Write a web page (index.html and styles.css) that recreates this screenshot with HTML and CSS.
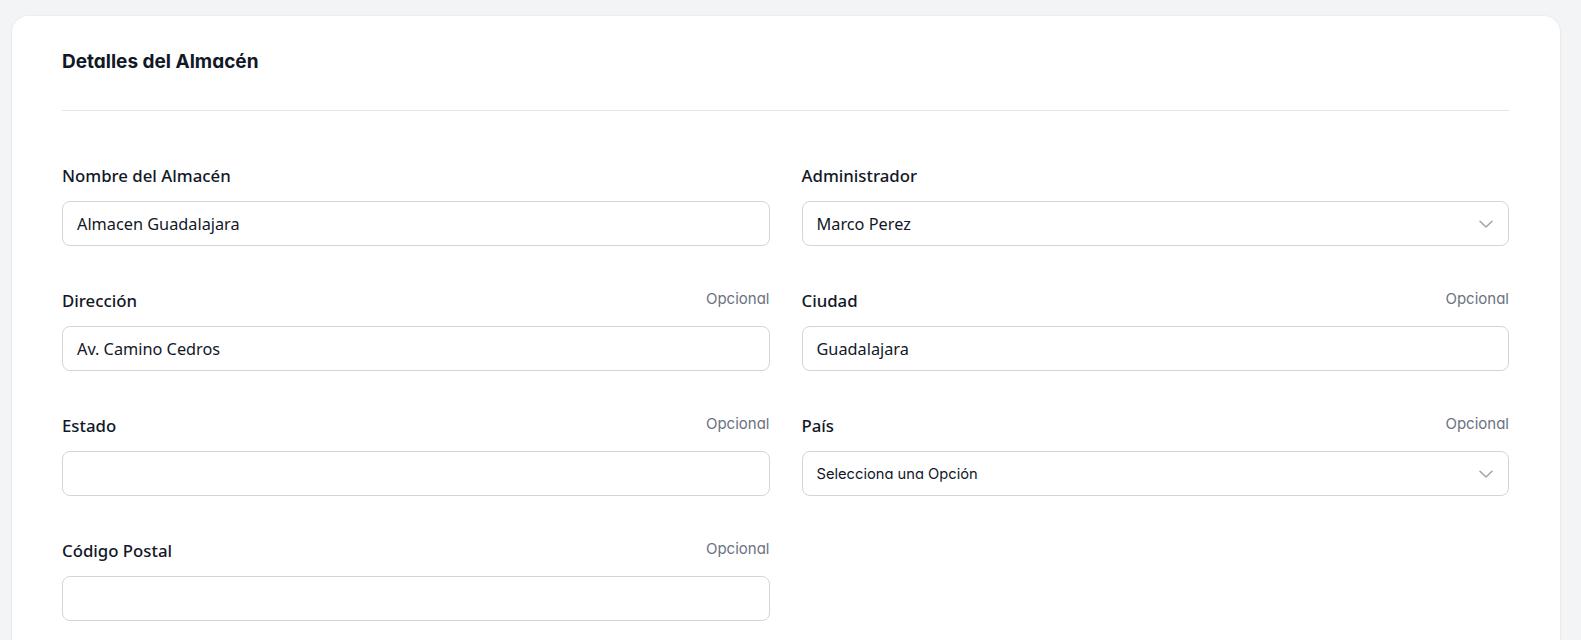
FILE: index.html
```html
<!DOCTYPE html>
<html lang="es">
<head>
<meta charset="utf-8">
<title>Detalles del Almacén</title>
<link rel="stylesheet" href="styles.css">
</head>
<body>
<div class="card">
  <h2 class="title">Detalles del Almacén</h2>
  <div class="divider"></div>
  <div class="grid">
    <div class="field">
      <div class="label-row"><label class="label">Nombre del Almacén</label></div>
      <div class="input"><span class="value">Almacen Guadalajara</span></div>
    </div>
    <div class="field">
      <div class="label-row"><label class="label">Administrador</label></div>
      <div class="input select"><span class="value">Marco Perez</span>
        <svg class="chev" width="14" height="8" viewBox="0 0 14 8" fill="none" stroke="#9ca3af" stroke-width="1.5" stroke-linecap="round" stroke-linejoin="round"><path d="M1 1.2l6 5.8 6-5.8"/></svg>
      </div>
    </div>
    <div class="field">
      <div class="label-row"><label class="label">Dirección</label><span class="opt">Opcional</span></div>
      <div class="input"><span class="value">Av. Camino Cedros</span></div>
    </div>
    <div class="field">
      <div class="label-row"><label class="label">Ciudad</label><span class="opt">Opcional</span></div>
      <div class="input"><span class="value">Guadalajara</span></div>
    </div>
    <div class="field">
      <div class="label-row"><label class="label">Estado</label><span class="opt">Opcional</span></div>
      <div class="input"></div>
    </div>
    <div class="field">
      <div class="label-row"><label class="label">País</label><span class="opt">Opcional</span></div>
      <div class="input select"><span class="placeholder">Selecciona una Opción</span>
        <svg class="chev" width="14" height="8" viewBox="0 0 14 8" fill="none" stroke="#9ca3af" stroke-width="1.5" stroke-linecap="round" stroke-linejoin="round"><path d="M1 1.2l6 5.8 6-5.8"/></svg>
      </div>
    </div>
    <div class="field">
      <div class="label-row"><label class="label">Código Postal</label><span class="opt">Opcional</span></div>
      <div class="input"></div>
    </div>
  </div>
</div>
</body>
</html>
```
FILE: styles.css
```css
* { box-sizing: border-box; }
html, body { margin: 0; height: 100%; }
body {
  background: #f3f4f6;
  padding: 16px 21px 0 12px;
  font-family: "Noto Sans", "Open Sans", sans-serif;
  color: #111827;
  overflow: hidden;
}
.card {
  background: #fff;
  border-radius: 16px;
  box-shadow: 0 1px 3px rgba(0,0,0,0.06), 0 0 0 1px rgba(0,0,0,0.02);
  padding: 33px 51px 40px 50px;
  min-height: 700px;
}
.title {
  margin: 0;
  font-family: "Inter", sans-serif;
  font-weight: 700;
  font-size: 19px;
  line-height: 26px;
  color: #111827;
  font-feature-settings: "cv11";
}
.divider {
  height: 1px;
  background: #e5e7eb;
  margin: 35px 0 0;
}
.grid {
  display: grid;
  grid-template-columns: 1fr 1fr;
  column-gap: 32px;
  row-gap: 45px;
  padding-top: 55px;
}
.label-row {
  display: flex;
  justify-content: space-between;
  align-items: flex-start;
  height: 20px;
  margin-bottom: 15px;
}
.label {
  font-size: 16.8px;
  font-weight: 500;
  line-height: 20px;
  color: #111827;
}
.opt {
  font-family: "Inter", sans-serif;
  font-feature-settings: "cv11";
  font-size: 15px;
  line-height: 16px;
  color: #6b7280;
  margin-top: 0;
}
.input {
  height: 45px;
  border: 1px solid #d1d5db;
  border-radius: 8px;
  display: flex;
  align-items: center;
  padding: 0 15px 0 14px;
  background: #fff;
}
.value {
  font-size: 16.3px;
  color: #111827;
}
.placeholder {
  font-family: "Inter", sans-serif;
  font-feature-settings: "cv11";
  font-size: 14.7px;
  color: #111827;
}
.select { justify-content: space-between; }
.chev { display: block; }
```
